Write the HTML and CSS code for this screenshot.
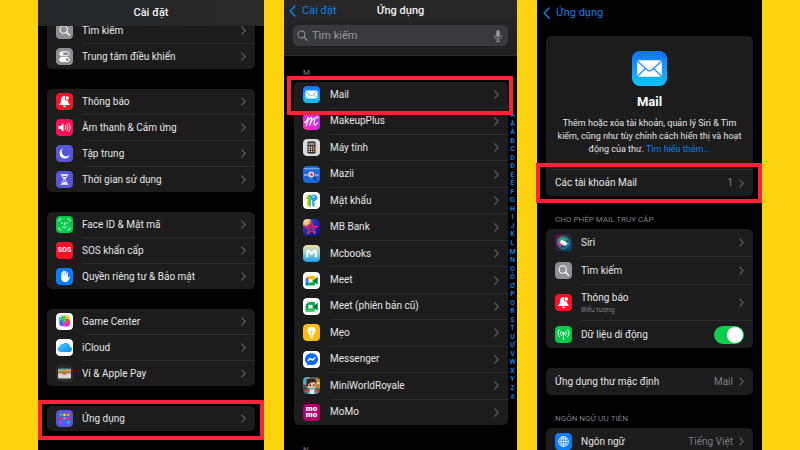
FILE: index.html
```html
<!DOCTYPE html>
<html lang="vi">
<head>
<meta charset="utf-8">
<meta name="viewport" content="width=device-width, initial-scale=1">
<title>Cài đặt Mail</title>
<link rel="stylesheet" href="styles.css">
</head>
<body>
<svg class="defs" aria-hidden="true">
  <defs>
    <linearGradient id="g-mail" x1="0" y1="0" x2="0" y2="1"><stop offset="0" stop-color="#1272ff"/><stop offset="1" stop-color="#12c4fb"/></linearGradient>
    <linearGradient id="g-makeup" x1="0" y1="1" x2="1" y2="0"><stop offset="0" stop-color="#ff2fa8"/><stop offset=".55" stop-color="#d42be0"/><stop offset="1" stop-color="#9a3df2"/></linearGradient>
    <linearGradient id="g-cloud" x1="0" y1="0" x2="1" y2="1"><stop offset="0" stop-color="#4fd0ff"/><stop offset="1" stop-color="#0a84f5"/></linearGradient>
    <linearGradient id="g-mcb" x1="0" y1="0" x2="0" y2="1"><stop offset="0" stop-color="#f3dd9c"/><stop offset=".5" stop-color="#8fcbd8"/><stop offset="1" stop-color="#1e9df0"/></linearGradient>
    <radialGradient id="g-mb" cx=".15" cy=".1" r="1"><stop offset="0" stop-color="#ffe9a0"/><stop offset=".25" stop-color="#e9b25c"/><stop offset=".36" stop-color="#2b3fc0"/><stop offset="1" stop-color="#0a1a9a"/></radialGradient>
    <linearGradient id="g-siri" x1="0" y1="0" x2="1" y2="1"><stop offset="0" stop-color="#7a1240"/><stop offset=".5" stop-color="#1c2a3c"/><stop offset="1" stop-color="#0b4a86"/></linearGradient>
    <symbol id="chevron" viewBox="0 0 5 9"><path d="M.8.8 4.2 4.5.8 8.2" fill="none" stroke="currentColor" stroke-width="1.2" stroke-linecap="round" stroke-linejoin="round"/></symbol>
    <symbol id="back" viewBox="0 0 7 12"><path d="M6 1 1.2 6 6 11" fill="none" stroke="currentColor" stroke-width="1.6" stroke-linecap="round" stroke-linejoin="round"/></symbol>
    <symbol id="lens" viewBox="0 0 12 12"><circle cx="4.8" cy="4.8" r="3.8" fill="none" stroke="currentColor" stroke-width="1.1"/><path d="m7.7 7.7 3.3 3.3" stroke="currentColor" stroke-width="1.3" stroke-linecap="round"/></symbol>
    <symbol id="mic" viewBox="0 0 8 12"><rect x="2.2" y="0" width="3.6" height="7.4" rx="1.8" fill="currentColor"/><path d="M.7 5v.8a3.3 3.3 0 0 0 6.6 0V5M4 9.2v2M2.2 11.3h3.6" fill="none" stroke="currentColor" stroke-width=".9" stroke-linecap="round"/></symbol>
    <symbol id="i-search" viewBox="0 0 34 34"><rect width="34" height="34" rx="7" fill="#8e8e93"/><circle cx="15.5" cy="15" r="7.5" fill="none" stroke="#fff" stroke-width="2.2"/><path d="m21 20.500 6 6" stroke="#fff" stroke-width="2.600" stroke-linecap="round"/></symbol>
    <symbol id="i-control" viewBox="0 0 34 34"><rect width="34" height="34" rx="7" fill="#8e8e93"/><rect x="7.500" y="7.500" width="19" height="8" rx="4" fill="none" stroke="#fff" stroke-width="2"/><circle cx="11.500" cy="11.500" r="3.600" fill="#fff"/><rect x="6.500" y="18" width="21" height="10" rx="5" fill="#fff"/><circle cx="22.500" cy="23" r="2.800" fill="#8e8e93"/></symbol>
    <symbol id="i-bell" viewBox="0 0 34 34"><rect width="34" height="34" rx="7" fill="#ff1027"/><path d="M17 6c-5 0-7 4-7 8.500 0 4.500-1.500 5.500-3.500 8V24h21v-1.500c-2-2.500-3.500-3.500-3.500-8C24 10 22 6 17 6Z" fill="#fff"/><path d="M14 25.500a3 3 0 0 0 6 0Z" fill="#fff"/><circle cx="22.500" cy="10" r="5" fill="#ff1027"/><circle cx="22.500" cy="10" r="3.500" fill="#fff"/></symbol>
    <symbol id="i-sound" viewBox="0 0 34 34"><rect width="34" height="34" rx="7" fill="#ff0f58"/><path d="M5 14h4l6-5.500v17L9 20H5Z" fill="#fff"/><path d="M18.500 13.500a6 6 0 0 1 0 7M22 11a10 10 0 0 1 0 12M25.500 8.500a14 14 0 0 1 0 17" fill="none" stroke="#fff" stroke-width="1.800" stroke-linecap="round"/></symbol>
    <symbol id="i-moon" viewBox="0 0 34 34"><rect width="34" height="34" rx="7" fill="#5756d8"/><path d="M14 6.500A10.500 10.500 0 1 0 27.500 20 9.500 9.500 0 0 1 14 6.500Z" fill="#fff"/></symbol>
    <symbol id="i-hour" viewBox="0 0 34 34"><rect width="34" height="34" rx="7" fill="#5756d8"/><path d="M10 7.500h14M10 26.500h14" stroke="#fff" stroke-width="2.400" stroke-linecap="round"/><path d="M12 9c0 5 4 5 4 8s-4 3-4 8h10c0-5-4-5-4-8s4-3 4-8Z" fill="none" stroke="#fff" stroke-width="1.800"/><path d="M13.500 12h7L17 16ZM13 25l4-4 4 4Z" fill="#fff"/></symbol>
    <symbol id="i-face" viewBox="0 0 34 34"><rect width="34" height="34" rx="7" fill="#08c84c"/><path d="M6 11V8.500A2.500 2.500 0 0 1 8.500 6H11M23 6h2.500A2.500 2.500 0 0 1 28 8.500V11M28 23v2.500a2.500 2.500 0 0 1-2.500 2.500H23M11 28H8.500A2.500 2.500 0 0 1 6 25.500V23M12 13v2.500M22 13v2.500M17.500 13v5.500H16M12 21.500c3 3 7 3 10 0" fill="none" stroke="#fff" stroke-width="1.500" stroke-linecap="round"/></symbol>
    <symbol id="i-hand" viewBox="0 0 34 34"><rect width="34" height="34" rx="7" fill="#087cff"/><path d="M12 18V9.500M15.500 16V6.500M19 16V7M22.500 18v-8" stroke="#fff" stroke-width="2.800" stroke-linecap="round"/><path d="M10.600 15h13.300v5l2-2.500c1.500-1 2.300.3 1.500 1.800-2 3.700-3.400 8.700-9 8.700-5 0-7.800-3-7.800-8Z" fill="#fff"/></symbol>
    <symbol id="i-game" viewBox="0 0 34 34"><rect width="34" height="34" rx="7" fill="#fff"/><circle cx="20" cy="12" r="7.500" fill="#ffc21a"/><circle cx="12" cy="13" r="6.500" fill="#3fc9e8"/><circle cx="15" cy="10" r="5" fill="#45d34c"/><circle cx="13" cy="20" r="6.500" fill="#3d6df5"/><circle cx="21" cy="20" r="7.500" fill="#f52cc0"/><circle cx="23" cy="17" r="5" fill="#ff3d50"/><circle cx="16.500" cy="16" r="4" fill="#52b85a"/></symbol>
    <symbol id="i-cloud" viewBox="0 0 34 34"><rect width="34" height="34" rx="7" fill="#fff"/><path d="M9.500 26a6 6 0 0 1-1.500-11.800c.3-3.500 3.300-5 5.600-3.900a8 8 0 0 1 14.200 4.700A5.600 5.600 0 0 1 26 26Z" fill="url(#g-cloud)"/></symbol>
    <symbol id="i-wallet" viewBox="0 0 34 34"><rect width="34" height="34" rx="7" fill="#2a2a2c"/><rect x="4" y="7" width="26" height="6" rx="1.500" fill="#3f9fbd"/><rect x="4" y="9.500" width="26" height="5" fill="#e2a93b"/><rect x="4" y="12" width="26" height="5" fill="#67a845"/><rect x="4" y="15" width="26" height="5" fill="#de5b4a"/><path d="M4 17h8c2 0 2 3 5 3s3-3 5-3h8v8a2 2 0 0 1-2 2H6a2 2 0 0 1-2-2Z" fill="#d8d4c8"/></symbol>
    <symbol id="i-apps" viewBox="0 0 34 34"><rect width="34" height="34" rx="7" fill="#5756d8"/><rect x="7" y="7" width="5" height="5" rx="1" fill="#1fd15c"/><rect x="14.500" y="7" width="5" height="5" rx="1" fill="#ffd21a"/><rect x="22" y="7" width="5" height="5" rx="1" fill="#ff9a1a"/><rect x="7" y="14.500" width="5" height="5" rx="1" fill="#ff2f45"/><rect x="14.500" y="14.500" width="5" height="5" rx="1" fill="#9a9aa4"/><rect x="22" y="14.500" width="5" height="5" rx="1" fill="#ff2f55"/><rect x="7" y="22" width="5" height="5" rx="1" fill="#c050f0"/><rect x="14.500" y="22" width="5" height="5" rx="1" fill="#0a84ff"/><rect x="22" y="22" width="5" height="5" rx="1" fill="#1cc5c0"/></symbol>
    <symbol id="i-mail" viewBox="0 0 34 34"><rect width="34" height="34" rx="7.500" fill="url(#g-mail)"/><rect x="5" y="9" width="24" height="16" rx="2" fill="#fff"/><path d="m5.500 10 9 8.200c1.600 1.500 3.400 1.500 5 0l9-8.200M5.500 24.300l7.500-7.300M28.500 24.300 21 17" fill="none" stroke="#2290f0" stroke-width="1.200"/></symbol>
    <symbol id="i-makeup" viewBox="0 0 34 34"><rect width="34" height="34" rx="7" fill="url(#g-makeup)"/><path d="M3.500 19c4-2 6-7 6.500-10.500C10 14 8.500 20 6.500 25.500 8.500 18 13 10 17.500 8.500 17 14 15 19 13.500 24 16 17 20 11 24.500 9.500 24 14 20 24 23 24.500c2.500 0 4.500-2.500 6-5" fill="none" stroke="#fff" stroke-width="2.400" stroke-linecap="round" stroke-linejoin="round"/><path d="M28.500 5.500v6M25.500 8.500h6" stroke="#fff" stroke-width="1.500"/></symbol>
    <symbol id="i-calc" viewBox="0 0 34 34"><rect width="34" height="34" rx="7" fill="#d9d9d7"/><rect x="9" y="5" width="16" height="24" rx="2.500" fill="#26262a"/><rect x="11" y="7.500" width="12" height="5" rx="1" fill="#8d9190"/><path d="M11 16.500h3M15.500 16.500h3M11 20.500h3M15.500 20.500h3M11 24.800h3M15.500 24.800h3" stroke="#d9d9d9" stroke-width="2.600"/><path d="M20 16.500h3M20 20.500h3M20 24.800h3" stroke="#ff9d1e" stroke-width="2.600"/></symbol>
    <symbol id="i-mazii" viewBox="0 0 34 34"><rect width="34" height="34" rx="7" fill="#1d67d8"/><path d="M1 5.500h32" stroke="#a9cdf8" stroke-width="1.600"/><path d="M2.500 18h7M24.500 18h7" stroke="#dce9ff" stroke-width="3.400" stroke-dasharray="2 1"/><path d="m20 21 6 7" stroke="#243a66" stroke-width="2.600" stroke-linecap="round"/><circle cx="16.500" cy="17" r="6" fill="#f4dfe6"/><path d="m16.500 12.500 1.300 2.700 3-.2-1.800 2.500 1.200 2.800-2.700-.8-2.200 2-.4-2.900-2.700-1.300 2.500-1.400Z" fill="#e33a4f"/></symbol>
    <symbol id="i-keys" viewBox="0 0 34 34"><rect width="34" height="34" rx="7" fill="#fff"/><path d="M10 6a5 5 0 0 0-2 9v12l2.500 2 2-2V6.500Z" fill="#ffcd21"/><path d="M14 5a6 6 0 0 0-3 10v12l3 3 2-2V5Z" fill="#56c662"/><path d="M21 5a6.500 6.500 0 0 0-2.500 12.300V27l3 3 2.500-2.500-2-2 2-2.500-2-2 1.500-3.200A6.500 6.500 0 0 0 21 5Z" fill="#1fa3f5"/><circle cx="21" cy="9.500" r="2" fill="#fff"/></symbol>
    <symbol id="i-mb" viewBox="0 0 34 34"><rect width="34" height="34" rx="7" fill="url(#g-mb)"/><path d="m17 6 2.500 9 9.500-.5-8 6 4 8.500-8-5-8 5.500 3-9-7-5 8.500-1Z" fill="none" stroke="#f0285f" stroke-width="2.400" stroke-linejoin="round"/><path d="m12 20 9-1M16 14l4 7" stroke="#f0285f" stroke-width="1.500"/></symbol>
    <symbol id="i-mcb" viewBox="0 0 34 34"><rect width="34" height="34" rx="7" fill="url(#g-mcb)"/><path d="M8.500 23V13.500c0-2.500 2.500-3 4-1l4.500 5.500 4.500-5.500c1.500-2 4-1.500 4 1V23" fill="none" stroke="#fff" stroke-width="4" stroke-linecap="round" stroke-linejoin="round"/></symbol>
    <symbol id="i-meet" viewBox="0 0 34 34"><rect width="34" height="34" rx="7" fill="#fff"/><path d="m5 14 6-6v6Z" fill="#ea4335"/><path d="M5 14h6v7H5Z" fill="#2684fc"/><path d="M5 21h6v6H7a2 2 0 0 1-2-2Z" fill="#0066da"/><path d="M11 8h11a2 2 0 0 1 2 2v7l-5 1v-4h-8Z" fill="#ffba00"/><path d="M11 21h8v-4l5 1v7a2 2 0 0 1-2 2H11Z" fill="#00ac47"/><path d="m20 17.500 8-7c.8-.6 1.500-.2 1.500.6v12.800c0 .8-.7 1.200-1.500.6Z" fill="#00832d"/></symbol>
    <symbol id="i-meet-old" viewBox="0 0 34 34"><rect width="34" height="34" rx="7" fill="#fff"/><path d="m5 14 6-6v6Z" fill="#0b8a3d"/><path d="M11 8h11a2 2 0 0 1 2 2v15a2 2 0 0 1-2 2H7a2 2 0 0 1-2-2V14h6Z" fill="#12a84f"/><rect x="11" y="14" width="8" height="7" fill="#fff"/><path d="M5 21h19v4a2 2 0 0 1-2 2H7a2 2 0 0 1-2-2Z" fill="#35c463"/><path d="m20 17.500 8-7c.8-.6 1.500-.2 1.500.6v12.800c0 .8-.7 1.200-1.500.6Z" fill="#087a33"/></symbol>
    <symbol id="i-tips" viewBox="0 0 34 34"><rect width="34" height="34" rx="7" fill="#ffbc0a"/><path d="M17 5.500a8 8 0 0 0-8 8c0 4 3.500 5.500 4.300 9.500h7.400c.8-4 4.300-5.500 4.300-9.500a8 8 0 0 0-8-8Z" fill="#fff"/><path d="M14 15h6M17 15v8" stroke="#ffbc0a" stroke-width="1.300"/><path d="M14 25.500h6M15 28h4" stroke="#fff" stroke-width="1.800" stroke-linecap="round"/></symbol>
    <symbol id="i-mess" viewBox="0 0 34 34"><rect width="34" height="34" rx="7" fill="#fff"/><path d="M17 4.500C9.500 4.500 4 9.800 4 16.500c0 3.700 1.600 6.700 4.300 8.800V29l4-1.500c1.500.5 3 .8 4.700.8 7.500 0 13-5.200 13-11.800S24.500 4.500 17 4.500Z" fill="#0a6cff"/><path d="m10.500 19 4-4 4.500 3 4.500-4" fill="none" stroke="#fff" stroke-width="3" stroke-linejoin="round" stroke-linecap="round"/></symbol>
    <symbol id="i-mini" viewBox="0 0 34 34"><rect width="34" height="34" rx="7" fill="#4d5a5c"/><path d="M0 7a7 7 0 0 1 7-7h6L9 15H0Z" fill="#55aabd"/><path d="M24 3h10v20H24Z" fill="#b8863b"/><path d="m26 8 8 3v4l-8-2Z" fill="#e9c871"/><path d="M0 22h12v12H7a7 7 0 0 1-7-7Z" fill="#31454a"/><path d="M9 9h16v13H9Z" fill="#e9b99a"/><path d="M7 4h17l3 5-1 5-3-4-7 1-5 3-1 5-3-3Z" fill="#38241f"/><path d="M13 15h3v3h-3ZM20 15h3v3h-3Z" fill="#1d2b3c"/><path d="M9 22h16l3 12H7Z" fill="#27a6b8"/><path d="m14 22 4 4 4-4 1 12H13Z" fill="#e7e5dc"/><path d="m2 27 10-4 2 4-11 5Z" fill="#c9482e"/><path d="m24 25 8 3-2 5-6-3Z" fill="#d9552e"/></symbol>
    <symbol id="i-siri" viewBox="0 0 34 34"><rect width="34" height="34" rx="7" fill="url(#g-siri)"/><circle cx="17" cy="17" r="12.500" fill="#1f5965" stroke="#48b0a8" stroke-width="1.200"/><path d="M6 13c5-8 15-8 21 0-6-2-8 4-10 5-4 1-8-1-11-5Z" fill="#2fc99a" opacity=".75"/><path d="M5 16c4-3 9-2 12 3-3 8-10 7-12-3Z" fill="#e8379a" opacity=".85"/><path d="M17 19c4-4 9-3 11 0-3 5-8 7-12 4Z" fill="#39a9f0" opacity=".85"/><ellipse cx="17" cy="17.500" rx="7" ry="4" transform="rotate(25 17 17.500)" fill="#fff"/></symbol>
    <symbol id="i-cell" viewBox="0 0 34 34"><rect width="34" height="34" rx="7" fill="#08c84c"/><circle cx="17" cy="14.500" r="2.400" fill="#fff"/><path d="M17 15v12" stroke="#fff" stroke-width="1.900" stroke-linecap="round"/><path d="M12.500 10.500a6.500 6.500 0 0 0 0 8.500M21.500 10.500a6.500 6.500 0 0 1 0 8.500M8.500 7.500a11 11 0 0 0 0 14M25.500 7.500a11 11 0 0 1 0 14" fill="none" stroke="#fff" stroke-width="1.800" stroke-linecap="round"/></symbol>
    <symbol id="i-globe" viewBox="0 0 34 34"><rect width="34" height="34" rx="7" fill="#087cff"/><g fill="none" stroke="#fff" stroke-width="1.500"><circle cx="17" cy="17" r="10"/><ellipse cx="17" cy="17" rx="4.800" ry="10"/><path d="M17 7v20M7 17h20M8.500 12h17M8.500 22h17"/></g></symbol>
  </defs>
</svg>

<main class="board">
  <section class="phone phone-settings">
    <header class="bar bar-plain"><h1>Cài đặt</h1></header>
    <div class="scroll">
      <ul class="group">
        <li><a class="row" href="#"><svg class="icon"><use href="#i-search"/></svg><span class="label">Tìm kiếm</span><svg class="chev"><use href="#chevron"/></svg></a></li>
        <li><a class="row" href="#"><svg class="icon"><use href="#i-control"/></svg><span class="label">Trung tâm điều khiển</span><svg class="chev"><use href="#chevron"/></svg></a></li>
      </ul>
      <ul class="group">
        <li><a class="row" href="#"><svg class="icon"><use href="#i-bell"/></svg><span class="label">Thông báo</span><svg class="chev"><use href="#chevron"/></svg></a></li>
        <li><a class="row" href="#"><svg class="icon"><use href="#i-sound"/></svg><span class="label">Âm thanh &amp; Cảm ứng</span><svg class="chev"><use href="#chevron"/></svg></a></li>
        <li><a class="row" href="#"><svg class="icon"><use href="#i-moon"/></svg><span class="label">Tập trung</span><svg class="chev"><use href="#chevron"/></svg></a></li>
        <li><a class="row" href="#"><svg class="icon"><use href="#i-hour"/></svg><span class="label">Thời gian sử dụng</span><svg class="chev"><use href="#chevron"/></svg></a></li>
      </ul>
      <ul class="group">
        <li><a class="row" href="#"><svg class="icon"><use href="#i-face"/></svg><span class="label">Face ID &amp; Mật mã</span><svg class="chev"><use href="#chevron"/></svg></a></li>
        <li><a class="row" href="#"><span class="icon icon-sos">SOS</span><span class="label">SOS khẩn cấp</span><svg class="chev"><use href="#chevron"/></svg></a></li>
        <li><a class="row" href="#"><svg class="icon"><use href="#i-hand"/></svg><span class="label">Quyền riêng tư &amp; Bảo mật</span><svg class="chev"><use href="#chevron"/></svg></a></li>
      </ul>
      <ul class="group">
        <li><a class="row" href="#"><svg class="icon"><use href="#i-game"/></svg><span class="label">Game Center</span><svg class="chev"><use href="#chevron"/></svg></a></li>
        <li><a class="row" href="#"><svg class="icon"><use href="#i-cloud"/></svg><span class="label">iCloud</span><svg class="chev"><use href="#chevron"/></svg></a></li>
        <li><a class="row" href="#"><svg class="icon"><use href="#i-wallet"/></svg><span class="label">Ví &amp; Apple Pay</span><svg class="chev"><use href="#chevron"/></svg></a></li>
      </ul>
      <ul class="group">
        <li class="marked"><a class="row" href="#"><svg class="icon"><use href="#i-apps"/></svg><span class="label">Ứng dụng</span><svg class="chev"><use href="#chevron"/></svg></a></li>
      </ul>
    </div>
  </section>

  <section class="phone phone-apps">
    <header class="bar bar-search">
      <div class="nav">
        <a class="back" href="#"><svg><use href="#back"/></svg>Cài đặt</a>
        <h2>Ứng dụng</h2>
      </div>
      <div class="search">
        <svg class="lens"><use href="#lens"/></svg>
        <input type="search" placeholder="Tìm kiếm" aria-label="Tìm kiếm">
        <button type="button" aria-label="Micrô"><svg><use href="#mic"/></svg></button>
      </div>
    </header>
    <div class="indexed">
      <div class="sections">
        <h3 class="caption">M</h3>
        <ul class="group app-list">
          <li class="marked"><a class="row" href="#"><svg class="icon"><use href="#i-mail"/></svg><span class="label">Mail</span><svg class="chev"><use href="#chevron"/></svg></a></li>
          <li><a class="row" href="#"><svg class="icon"><use href="#i-makeup"/></svg><span class="label">MakeupPlus</span><svg class="chev"><use href="#chevron"/></svg></a></li>
          <li><a class="row" href="#"><svg class="icon"><use href="#i-calc"/></svg><span class="label">Máy tính</span><svg class="chev"><use href="#chevron"/></svg></a></li>
          <li><a class="row" href="#"><svg class="icon"><use href="#i-mazii"/></svg><span class="label">Mazii</span><svg class="chev"><use href="#chevron"/></svg></a></li>
          <li><a class="row" href="#"><svg class="icon"><use href="#i-keys"/></svg><span class="label">Mật khẩu</span><svg class="chev"><use href="#chevron"/></svg></a></li>
          <li><a class="row" href="#"><svg class="icon"><use href="#i-mb"/></svg><span class="label">MB Bank</span><svg class="chev"><use href="#chevron"/></svg></a></li>
          <li><a class="row" href="#"><svg class="icon"><use href="#i-mcb"/></svg><span class="label">Mcbooks</span><svg class="chev"><use href="#chevron"/></svg></a></li>
          <li><a class="row" href="#"><svg class="icon"><use href="#i-meet"/></svg><span class="label">Meet</span><svg class="chev"><use href="#chevron"/></svg></a></li>
          <li><a class="row" href="#"><svg class="icon"><use href="#i-meet-old"/></svg><span class="label">Meet (phiên bản cũ)</span><svg class="chev"><use href="#chevron"/></svg></a></li>
          <li><a class="row" href="#"><svg class="icon"><use href="#i-tips"/></svg><span class="label">Mẹo</span><svg class="chev"><use href="#chevron"/></svg></a></li>
          <li><a class="row" href="#"><svg class="icon"><use href="#i-mess"/></svg><span class="label">Messenger</span><svg class="chev"><use href="#chevron"/></svg></a></li>
          <li><a class="row" href="#"><svg class="icon"><use href="#i-mini"/></svg><span class="label">MiniWorldRoyale</span><svg class="chev"><use href="#chevron"/></svg></a></li>
          <li><a class="row" href="#"><span class="icon icon-momo"><span>mo</span><span>mo</span></span><span class="label">MoMo</span><svg class="chev"><use href="#chevron"/></svg></a></li>
        </ul>
        <h3 class="caption">N</h3>
      </div>
      <ol class="letters">
        <li>A</li><li>Ă</li><li>Â</li><li>B</li><li>C</li><li>D</li><li>Đ</li><li>E</li><li>Ê</li><li>F</li><li>G</li><li>H</li><li>I</li><li>J</li><li>K</li><li>L</li><li>M</li><li>N</li><li>O</li><li>Ô</li><li>Ơ</li><li>P</li><li>Q</li><li>R</li><li>S</li><li>T</li><li>U</li><li>Ư</li><li>V</li><li>W</li><li>X</li><li>Y</li><li>Z</li><li>#</li>
      </ol>
    </div>
  </section>

  <section class="phone phone-mail">
    <header class="bar bar-clear"><a class="back" href="#"><svg><use href="#back"/></svg>Ứng dụng</a></header>
    <div class="group intro">
      <div class="about">
        <svg class="app-icon"><use href="#i-mail"/></svg>
        <h2>Mail</h2>
        <p>Thêm hoặc xóa tài khoản, quản lý Siri &amp; Tìm kiếm, cũng như tùy chỉnh cách hiển thị và hoạt động của thư. <a href="#">Tìm hiểu thêm...</a></p>
      </div>
      <div class="marked"><a class="row" href="#"><span class="label">Các tài khoản Mail</span><span class="value">1</span><svg class="chev"><use href="#chevron"/></svg></a></div>
    </div>
    <h3 class="caption">CHO PHÉP MAIL TRUY CẬP</h3>
    <ul class="group">
      <li><a class="row" href="#"><svg class="icon"><use href="#i-siri"/></svg><span class="label">Siri</span><svg class="chev"><use href="#chevron"/></svg></a></li>
      <li><a class="row" href="#"><svg class="icon"><use href="#i-search"/></svg><span class="label">Tìm kiếm</span><svg class="chev"><use href="#chevron"/></svg></a></li>
      <li><a class="row row-tall" href="#"><svg class="icon"><use href="#i-bell"/></svg><span class="label">Thông báo<small>Biểu tượng</small></span><svg class="chev"><use href="#chevron"/></svg></a></li>
      <li><label class="row"><svg class="icon"><use href="#i-cell"/></svg><span class="label">Dữ liệu di động</span><input class="switch" type="checkbox" role="switch" checked></label></li>
    </ul>
    <ul class="group default-app">
      <li><a class="row" href="#"><span class="label">Ứng dụng thư mặc định</span><span class="value">Mail</span><svg class="chev"><use href="#chevron"/></svg></a></li>
    </ul>
    <h3 class="caption">NGÔN NGỮ ƯU TIÊN</h3>
    <ul class="group">
      <li><a class="row" href="#"><svg class="icon"><use href="#i-globe"/></svg><span class="label">Ngôn ngữ</span><span class="value">Tiếng Việt</span><svg class="chev"><use href="#chevron"/></svg></a></li>
    </ul>
  </section>
</main>
</body>
</html>
```

FILE: styles.css
```css
:root {
  --yellow: #fdd20f;
  --card: #1c1c1d;
  --line: #2a2a2d;
  --text: #e6e6e6;
  --muted: #7d7d82;
  --blue: #0b7fe8;
  --mark: #fa2339;
}

* { box-sizing: border-box; }

body {
  margin: 0;
  background: var(--yellow);
  color: var(--text);
  font: 10px/14px Roboto, "Liberation Sans", sans-serif;
}

h1, h2, h3, p, ul, ol { margin: 0; padding: 0; font-weight: 400; }
ul, ol { list-style: none; }
a { color: inherit; text-decoration: none; }
.defs { position: absolute; width: 0; height: 0; }

.board {
  display: grid;
  grid-template-columns: 226fr 233fr 225fr;
  gap: 20px;
  height: 100vh;
  padding: 0 38px;
  overflow: hidden;
}

.phone { min-width: 0; height: 100vh; background: #000; }

/* Header bars */
.bar { position: relative; z-index: 1; }
.bar-plain {
  padding: 6px 0;
  background: linear-gradient(90deg, #252527, #26292c 25%, #262626 60%, #2a2a2a);
  text-align: center;
}
.bar h1, .bar h2 { font-size: 11px; font-weight: 500; color: #f2f2f2; }
.bar-search {
  padding: 4px 9px 9px;
  background: linear-gradient(#282828, #1f1f20);
  border-bottom: 1px solid #2b2b2c;
}
.nav {
  display: grid;
  grid-template-columns: 1fr auto 1fr;
  align-items: center;
  margin: 0 -4px;
}
.bar-clear { padding: 6px 6px 16px; }
.back { display: flex; align-items: center; gap: 6px; font-size: 11px; color: var(--blue); }
.back svg { width: 7px; height: 12px; }

.search {
  display: flex;
  align-items: center;
  gap: 4px;
  height: 21px;
  margin-top: 7px;
  padding: 0 6px 0 4px;
  border-radius: 5px;
  background: #3a3a3c;
  color: #98989d;
}
.search input {
  flex: 1;
  min-width: 0;
  padding: 0;
  border: 0;
  outline: 0;
  background: none;
  color: inherit;
  font: inherit;
  font-size: 11px;
}
.search input::placeholder { color: inherit; opacity: 1; }
.search button { display: flex; padding: 0; border: 0; background: none; color: inherit; }
.search button svg { width: 8px; height: 12px; }
.lens { width: 11px; height: 11px; }

/* Grouped lists */
.group { margin: 0 9px; border-radius: 5px; background: var(--card); }
.group li + li::before { content: ""; display: block; height: 1px; margin-left: 35px; background: var(--line); }
.row { display: flex; align-items: center; min-height: 25px; padding: 0 9px; }
.icon { flex: none; width: 17px; height: 17px; margin-right: 9px; border-radius: 4px; }
.label { flex: 1; white-space: nowrap; }
.label small { display: block; font-size: 7px; line-height: 10px; color: var(--muted); }
.value { margin-right: 6px; color: var(--muted); }
.chev { flex: none; width: 5px; height: 9px; color: #5c5c60; }
.caption { font-size: 8px; line-height: 10px; color: var(--muted); }

.icon-sos {
  background: #ff1027;
  color: #fff;
  font-size: 7px;
  font-weight: 700;
  line-height: 17px;
  text-align: center;
}
.icon-momo {
  display: flex;
  flex-direction: column;
  justify-content: center;
  padding-bottom: 1px;
  background: #b0006d;
  color: #fff;
  font-size: 8px;
  font-weight: 900;
  line-height: 6px;
  text-align: center;
}

/* Red frame round the row to tap */
.marked { position: relative; }
.marked::after {
  content: "";
  position: absolute;
  z-index: 2;
  inset: -6px -9px -9px;
  border: 4px solid var(--mark);
  pointer-events: none;
}

/* Settings */
.scroll { display: grid; gap: 20px; margin-top: -8px; }

/* App list */
.indexed { display: flex; padding-left: 10px; }
.sections { flex: 1; min-width: 0; }
.sections .caption { padding: 12px 9px 4px; }
.app-list { display: flex; flex-direction: column; min-height: 343px; margin: 0; }
.app-list li { flex: 1; display: flex; flex-direction: column; }
.app-list .row { flex: 1; }
.app-list .icon { margin-right: 10px; }
.app-list .marked::after { inset: -6px -5px -8px -7px; }
.app-list + .caption { padding-top: 20px; }
.letters {
  display: flex;
  flex-direction: column;
  justify-content: space-between;
  width: 9px;
  height: 290px;
  margin-top: 55px;
  color: var(--blue);
  font-size: 7px;
  font-weight: 600;
  line-height: 8px;
  text-align: center;
}

/* Mail */
.phone-mail .row { min-height: 27px; }
.phone-mail .row-tall { min-height: 35px; }
.phone-mail .caption { padding: 19px 18px 4px; }
.about { padding: 15px 10px 13px; text-align: center; }
.about h2 { margin-top: 7px; font-size: 13px; font-weight: 700; line-height: 18px; color: #fff; }
.about p { margin-top: 6px; font-size: 9px; line-height: 13px; }
.about a { color: var(--blue); }
.app-icon { display: block; width: 35px; height: 35px; margin: 0 auto; }
.intro .row { border-top: 1px solid var(--line); }
.intro .marked::after { inset: -6px -9px -7px -10px; }
.default-app { margin-top: 20px; }

.switch {
  appearance: none;
  width: 30px;
  height: 18px;
  margin: 0;
  padding: 1px;
  border-radius: 9px;
  background: #3a3a3c;
}
.switch::before { content: ""; display: block; width: 16px; height: 16px; border-radius: 50%; background: #fff; }
.switch:checked { background: #0ccf4e; }
.switch:checked::before { margin-left: auto; }
```
